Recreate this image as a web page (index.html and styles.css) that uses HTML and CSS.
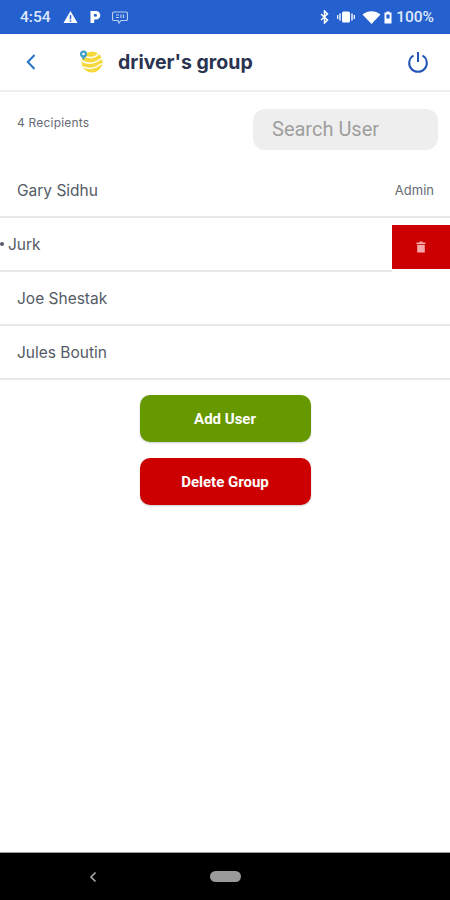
FILE: index.html
```html
<!DOCTYPE html>
<html lang="en">
<head>
<meta charset="utf-8">
<title>driver's group</title>
<link rel="stylesheet" href="styles.css">
</head>
<body>
<div class="screen">
  <div class="statusbar">
    <div class="status-left">
      <span class="time">4:54</span>
      <svg class="ic-warn" viewBox="0 0 16 14"><path d="M8 0.5 L15.5 13.5 H0.5 Z" fill="#fff"/><rect x="7.2" y="5" width="1.6" height="4.5" fill="#2560cf"/><rect x="7.2" y="10.5" width="1.6" height="1.6" fill="#2560cf"/></svg>
      <svg class="ic-p" viewBox="0 0 12 14"><path d="M1.5 1 H7 A4.2 4.2 0 0 1 7 9.6 H5.2 V13 H1.5 Z" fill="#fff"/><circle cx="6.4" cy="5.3" r="1.5" fill="#2560cf"/></svg>
      <svg class="ic-msg" viewBox="0 0 16 13"><path d="M2 1 H14 A1.5 1.5 0 0 1 15.5 2.5 V8 A1.5 1.5 0 0 1 14 9.5 H9 L7 12 L6 9.5 H2 A1.5 1.5 0 0 1 .5 8 V2.500 A1.5 1.500 0 0 1 2 1 Z" fill="none" stroke="#b9cdf0" stroke-width="1.200"/><path d="M4 4 H7 M4 6.500 H7 M9 3.500 V7 M11.500 3.500 V7" stroke="#b9cdf0" stroke-width="1.200"/></svg>
    </div>
    <div class="status-right">
      <svg class="ic-bt" viewBox="0 0 9 14"><path d="M1 4 L7.500 10 L4.500 13 V1 L7.500 4 L1 10" fill="none" stroke="#fff" stroke-width="1.500"/></svg>
      <svg class="ic-vib" viewBox="0 0 18 12"><rect x="5" y="0.500" width="8" height="11" rx="1.500" fill="#fff"/><path d="M3 2.500 V9.500 M15 2.500 V9.500" stroke="#fff" stroke-width="1.400"/><path d="M0.700 4 V8 M17.300 4 V8" stroke="#fff" stroke-width="1.200"/></svg>
      <svg class="ic-wifi" viewBox="0 0 18 13"><path d="M0 3.500 C5 -1 13 -1 18 3.500 L9 13 Z" fill="#fff"/></svg>
      <svg class="ic-batt" viewBox="0 0 8 13"><path d="M2.500 0.500 H5.500 V1.500 H7.500 V12.500 H0.500 V1.500 H2.500 Z" fill="#fff"/><rect x="2.400" y="3.500" width="3.200" height="4" fill="#2560cf"/></svg>
      <span class="pct">100%</span>
    </div>
  </div>

  <header class="appbar">
    <svg class="back" viewBox="0 0 12 18"><path d="M9.500 2 L2.800 9 L9.500 16" fill="none" stroke="#2a72c8" stroke-width="2"/></svg>
    <div class="title-wrap">
      <svg class="logo" viewBox="0 0 26 24">
        <circle cx="14" cy="13" r="10.500" fill="#f5d83c"/>
        <path d="M6 6.500 C11 10 17 9 21 4.500 M4 12 C11 16 18 14 24 9 M5.500 18 C11 20.500 18 19 23.500 14.500" fill="none" stroke="#fff" stroke-width="1.500"/>
        <circle cx="5.500" cy="5" r="3.500" fill="#3f9fc8"/><circle cx="5.500" cy="5" r="1.300" fill="#fff"/>
        <path d="M3 7 L5.500 11 L8 7 Z" fill="#3f9fc8"/>
      </svg>
      <h1 class="title">driver's group</h1>
    </div>
    <svg class="power" viewBox="0 0 22 22"><path d="M6.500 4.500 A8.800 8.800 0 1 0 15.500 4.500" fill="none" stroke="#2454b8" stroke-width="2"/><path d="M11 1 V11" stroke="#2454b8" stroke-width="2"/></svg>
  </header>

  <main class="content">
    <div class="toolbar">
      <span class="count">4 Recipients</span>
      <div class="search">Search User</div>
    </div>
    <ul class="list">
      <li class="row"><span class="name">Gary Sidhu</span><span class="role">Admin</span></li>
      <li class="row row-swiped">
        <span class="dot"></span><span class="name">Jurk</span>
        <div class="del"><svg class="trash" viewBox="0 0 10 12"><path d="M3.500 .5 H6.500 V1.500 H9.500 V3 H.5 V1.500 H3.500 Z M1.200 3.800 H8.800 V11.500 H1.200 Z" fill="#f3a9a9"/></svg></div>
      </li>
      <li class="row"><span class="name">Joe Shestak</span></li>
      <li class="row"><span class="name">Jules Boutin</span></li>
    </ul>
    <div class="actions">
      <div class="btn btn-green">Add User</div>
      <div class="btn btn-red">Delete Group</div>
    </div>
  </main>

  <footer class="navbar">
    <svg class="nav-back" viewBox="0 0 8 12"><path d="M6.500 1.500 L2 6 L6.500 10.500" fill="none" stroke="#aaa" stroke-width="1.600"/></svg>
    <span class="pill"></span>
  </footer>
</div>
</body>
</html>
```
FILE: styles.css
```css
* { box-sizing: border-box; }
html, body { margin: 0; padding: 0; }
body { width: 450px; height: 900px; overflow: hidden; background: #fff; font-family: Roboto, "Liberation Sans", sans-serif; }
.screen { width: 450px; height: 900px; display: flex; flex-direction: column; }

.statusbar { height: 34px; flex: none; background: #2560cf; display: flex; justify-content: space-between; align-items: center; padding: 0 16px 0 20px; color: #fff; font-weight: 500; font-size: 15.5px; }
.status-left, .status-right { display: flex; align-items: center; }
.time { color: #dfe8f9; margin-right: 12px; }
.ic-warn { width: 15px; height: 14px; margin-right: 11px; }
.ic-p { width: 12px; height: 14px; margin-right: 11px; }
.ic-msg { width: 16px; height: 13px; }
.ic-bt { width: 9px; height: 14px; margin-right: 8px; }
.ic-vib { width: 18px; height: 12px; margin-right: 7px; }
.ic-wifi { width: 19px; height: 13px; margin-right: 3px; }
.ic-batt { width: 8px; height: 13px; margin-right: 4px; }
.pct { color: #dfe8f9; }

.appbar { height: 58px; flex: none; display: flex; align-items: center; padding: 0 21px 0 25px; border-bottom: 2px solid #eeeeee; }
.back { width: 12px; height: 18px; }
.title-wrap { display: flex; align-items: center; margin-left: 41px; flex: 1; }
.logo { width: 26px; height: 24px; margin-top: -2px; }
.title { margin: 0 0 0 14px; font-family: Inter, Roboto, sans-serif; font-size: 19.5px; font-weight: 700; color: #2a3350; line-height: 24px; }
.power { width: 22px; height: 22px; }

.content { flex: 1; display: flex; flex-direction: column; }
.toolbar { height: 72px; flex: none; display: flex; justify-content: space-between; align-items: flex-start; padding: 17px 12px 0 17px; }
.count { font-family: Inter, Roboto, sans-serif; font-size: 12px; color: #666c75; line-height: 28px; height: 28px; letter-spacing: .2px; }
.search { width: 185px; height: 41px; border-radius: 12px; background: #eeeeee; color: #9e9e9e; font-size: 20px; line-height: 41px; padding-left: 19px; }

.list { margin: 0; padding: 0; list-style: none; }
.row { height: 54px; display: flex; align-items: center; justify-content: space-between; padding: 0 16px 0 17px; border-bottom: 2px solid #e9e9e9; }
.name { font-family: Inter, Roboto, sans-serif; font-size: 15.5px; color: #555b66; }
.role { font-family: Inter, Roboto, sans-serif; font-size: 13px; color: #666c75; }
.row-swiped { position: relative; justify-content: flex-start; padding-left: 0; padding-right: 0; border-bottom-color: transparent; }
.row-swiped::after { content: ""; position: absolute; left: 0; right: 58px; bottom: -2px; height: 2px; background: #e9e9e9; }
.dot { width: 4px; height: 4px; border-radius: 50%; background: #555b66; margin-right: 4px; }
.del { position: absolute; right: 0; top: 7px; width: 58px; height: 44px; background: #cc0000; display: flex; align-items: center; justify-content: center; }
.trash { width: 10px; height: 12px; }

.actions { display: flex; flex-direction: column; align-items: center; gap: 16px; padding-top: 15px; }
.btn { width: 171px; height: 47px; border-radius: 10px; color: #fff; font-size: 15px; font-weight: 700; display: flex; align-items: center; justify-content: center; box-shadow: 0 1px 2px rgba(0,0,0,.2); }
.btn-green { background: #669900; }
.btn-red { background: #cc0000; }

.navbar { height: 48px; flex: none; background: #000; border-top: 1px solid #999; display: flex; align-items: center; padding-left: 89px; }
.nav-back { width: 8px; height: 12px; }
.pill { width: 31px; height: 11px; border-radius: 6px; background: #9a9a9a; margin-left: 113px; }
```
